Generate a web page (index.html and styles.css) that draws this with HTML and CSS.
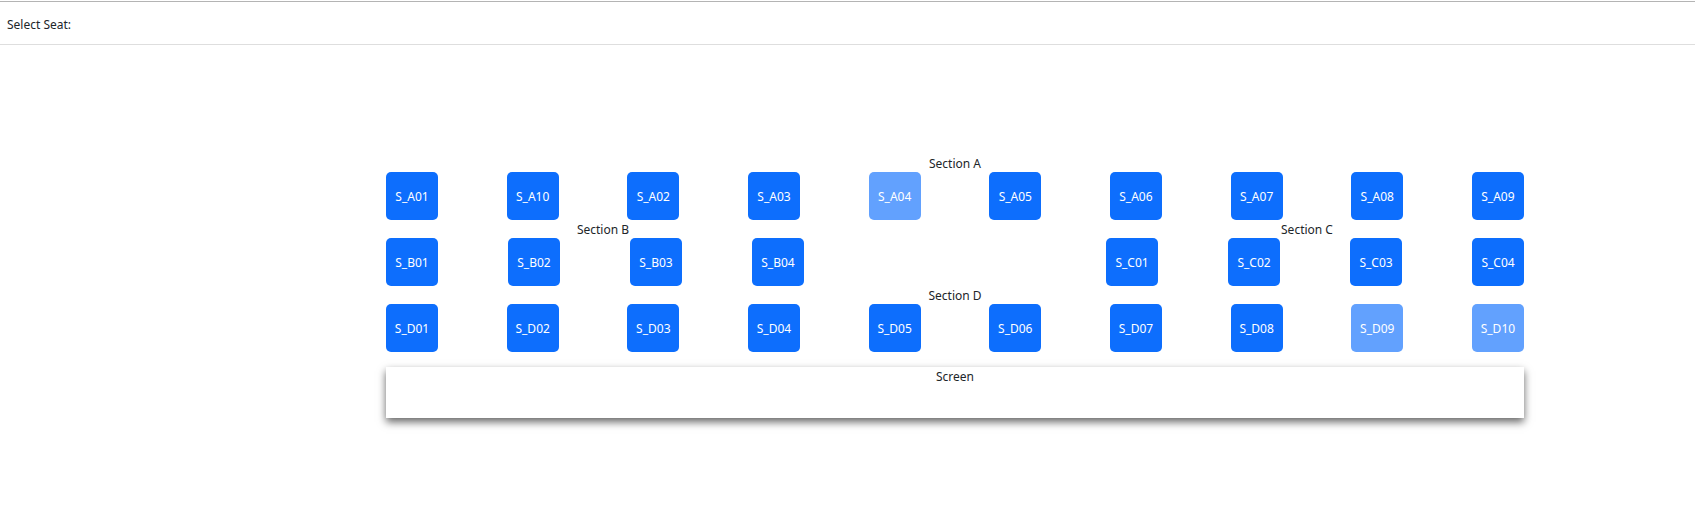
FILE: index.html
```html
<!DOCTYPE html>
<html lang="en">
<head>
<meta charset="utf-8">
<title>Select Seat</title>
<link rel="stylesheet" href="styles.css">
</head>
<body>
<header class="topbar">Select Seat:</header>
<main class="hall">
  <section class="section">
    <div class="section-label">Section A</div>
    <div class="seats seats-spread">
      <div class="seat">S_A01</div>
      <div class="seat">S_A10</div>
      <div class="seat">S_A02</div>
      <div class="seat">S_A03</div>
      <div class="seat seat-off">S_A04</div>
      <div class="seat">S_A05</div>
      <div class="seat">S_A06</div>
      <div class="seat">S_A07</div>
      <div class="seat">S_A08</div>
      <div class="seat">S_A09</div>
    </div>
  </section>
  <div class="pair">
    <section class="section half">
      <div class="section-label">Section B</div>
      <div class="seats seats-fixed">
        <div class="seat">S_B01</div>
        <div class="seat">S_B02</div>
        <div class="seat">S_B03</div>
        <div class="seat">S_B04</div>
      </div>
    </section>
    <section class="section half">
      <div class="section-label">Section C</div>
      <div class="seats seats-fixed seats-end">
        <div class="seat">S_C01</div>
        <div class="seat">S_C02</div>
        <div class="seat">S_C03</div>
        <div class="seat">S_C04</div>
      </div>
    </section>
  </div>
  <section class="section">
    <div class="section-label">Section D</div>
    <div class="seats seats-spread">
      <div class="seat">S_D01</div>
      <div class="seat">S_D02</div>
      <div class="seat">S_D03</div>
      <div class="seat">S_D04</div>
      <div class="seat">S_D05</div>
      <div class="seat">S_D06</div>
      <div class="seat">S_D07</div>
      <div class="seat">S_D08</div>
      <div class="seat seat-off">S_D09</div>
      <div class="seat seat-off">S_D10</div>
    </div>
  </section>
  <div class="screen">Screen</div>
</main>
</body>
</html>
```
FILE: styles.css
```css
html, body {
  margin: 0;
  padding: 0;
  background: #ffffff;
}
body {
  font-family: "Noto Sans", "Open Sans", sans-serif;
  font-size: 12px;
  color: #212529;
  min-height: 514px;
}
.topbar {
  margin-top: 1px;
  height: 44px;
  box-sizing: border-box;
  border-top: 1px solid #b4b4b4;
  border-bottom: 1px solid #dedede;
  display: flex;
  align-items: center;
  padding: 4px 0 0 7px;
  line-height: 18px;
}
.hall {
  width: 1138px;
  margin-left: 386px;
  margin-top: 109px;
  padding-bottom: 40px;
  display: flex;
  flex-direction: column;
}
.section-label {
  height: 18px;
  line-height: 20px;
  text-align: center;
}
.seats {
  display: flex;
  height: 48px;
}
.seats-spread {
  justify-content: space-between;
}
.seats-fixed {
  gap: 70px;
}
.seats-end {
  justify-content: flex-end;
}
.pair {
  display: flex;
  justify-content: space-between;
}
.half {
  width: 434px;
}
.seat {
  width: 52px;
  height: 48px;
  border-radius: 5px;
  background: #0d6efd;
  color: #ffffff;
  display: flex;
  align-items: center;
  justify-content: center;
  flex: none;
}
.seat-off {
  background: #62a1fe;
}
.screen {
  margin-top: 15px;
  height: 51px;
  line-height: 20px;
  text-align: center;
  background: #ffffff;
  box-shadow: 0 4px 8px rgba(0, 0, 0, 0.6);
}
```
